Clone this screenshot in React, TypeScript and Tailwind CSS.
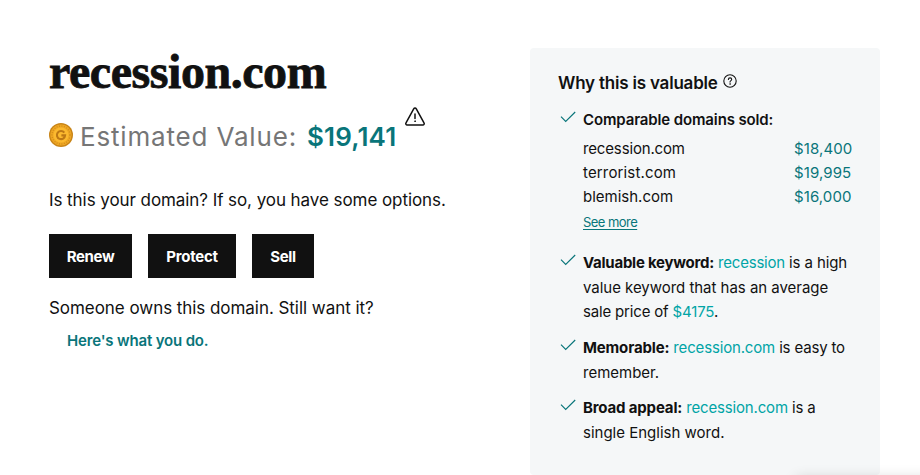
import type { ReactNode } from "react";

function Coin() {
  return (
    <svg className="-mt-[2px] h-6 w-6 shrink-0" viewBox="0 0 24 24">
      <circle cx="12" cy="12" r="12" fill="#c98518" />
      <circle cx="12" cy="12" r="10.6" fill="#f0a824" />
      <circle cx="12" cy="12" r="9" fill="none" stroke="#d4901c" strokeWidth="1.4" strokeDasharray="1.2 1.3" />
      <circle cx="12" cy="12" r="7.6" fill="#fbb92f" />
      <path d="M15.3 9.6A4.1 4.1 0 1 0 16.1 12.4H12.4" fill="none" stroke="#bd7814" strokeWidth="2.1" />
    </svg>
  );
}

function Warning() {
  return (
    <svg className="h-5 w-5" viewBox="0 0 20 20" fill="none" stroke="#111" strokeWidth="1.5" strokeLinecap="round" strokeLinejoin="round">
      <path d="M8.7 1.8a1.5 1.5 0 0 1 2.6 0l7.7 14.1a1.3 1.3 0 0 1-1.2 2H2.2a1.3 1.3 0 0 1-1.2-2z" />
      <path d="M10 7v4.4" />
      <circle cx="10" cy="14.2" r=".45" fill="#111" strokeWidth=".8" />
    </svg>
  );
}

function Help() {
  return (
    <svg className="h-[14px] w-[14px]" viewBox="0 0 14 14" fill="none" stroke="#111" strokeWidth="1.1" strokeLinecap="round">
      <circle cx="7" cy="7" r="6.2" />
      <path d="M5.4 5.5C5.4 3.3 8.7 3.4 8.7 5.4 8.7 6.7 7 6.6 7 8.1" />
      <circle cx="7" cy="10" r=".3" fill="#111" strokeWidth=".7" />
    </svg>
  );
}

function Check() {
  return (
    <svg className="mt-[3px] h-3 w-4 shrink-0" viewBox="0 0 16 12" fill="none" stroke="#09757a" strokeWidth="1.15">
      <path d="M1 5.7 5.7 10.4 15.2 1" />
    </svg>
  );
}

function Item({ children, className }: { children: ReactNode; className: string }) {
  return (
    <li className={`flex gap-[7px] whitespace-nowrap ${className}`}>
      <Check />
      <div>{children}</div>
    </li>
  );
}

const sales = [
  { name: "recession.com", price: "$18,400", spacing: "tracking-[-0.15px]" },
  { name: "terrorist.com", price: "$19,995", spacing: "tracking-[0.15px]" },
  { name: "blemish.com", price: "$16,000", spacing: "tracking-normal" },
];

export default function App() {
  return (
    <main className="relative flex h-[475px] w-[920px] overflow-hidden bg-white font-['Inter','Liberation_Sans',sans-serif] text-[#111]">
      <section className="ml-[49px] w-[481px] whitespace-nowrap pt-[46px]">
        <h1 className="h-[52px] font-['Liberation_Serif',serif] text-[48px] leading-[52px] font-bold tracking-[-0.45px] [-webkit-text-stroke:0.8px_#111]">recession.com</h1>
        <div className="mt-[18px] flex h-10 items-center">
          <Coin />
          <span className="ml-[7px] text-[26px] tracking-[0.83px] text-[#767676]">Estimated Value:</span>
          <span className="ml-[10px] text-[26px] font-semibold tracking-[0.15px] text-[#09757a]">$19,141</span>
          <span className="ml-[9px] self-start -mt-[9px]"><Warning /></span>
        </div>
        <p className="mt-8 h-6 text-[17px] leading-6 tracking-[-0.07px]">Is this your domain? If so, you have some options.</p>
        <div className="mt-[22px] flex gap-4 text-[15px] font-bold text-white">
          <button className="h-11 w-[83px] bg-[#111] pt-[2px] tracking-[-0.35px]">Renew</button>
          <button className="h-11 w-[88px] bg-[#111] pt-[2px] tracking-[-0.25px]">Protect</button>
          <button className="h-11 w-[62px] bg-[#111] pt-[2px] tracking-[-0.35px]">Sell</button>
        </div>
        <p className="mt-[18px] h-6 text-[17px] leading-6 tracking-[-0.05px]">Someone owns this domain. Still want it?</p>
        <a className="mt-[9px] ml-[18px] block text-[15px] leading-6 font-semibold tracking-[-0.16px] text-[#09757a]">Here's what you do.</a>
      </section>

      <aside className="mt-12 h-[427px] w-[350px] rounded bg-[#f5f7f8] pt-[23px] pl-[30px]">
        <h2 className="-ml-[2px] flex h-6 items-center gap-[5px] text-[17px] leading-6 font-semibold tracking-[-0.2px]">
          Why this is valuable <span className="-mt-1"><Help /></span>
        </h2>
        <ul className="mt-[13px] text-[15px] leading-[24.5px]">
          <Item className="h-[143px]">
            <div className="h-[29px] leading-6 font-semibold tracking-[-0.13px]">Comparable domains sold:</div>
            <div className="w-[270px]">
              {sales.map(({ name, price, spacing }) => (
                <div key={name} className="flex h-6 leading-6">
                  <span className={`w-[211px] ${spacing}`}>{name}</span>
                  <span className="tracking-[0.1px] text-[#09757a]">{price}</span>
                </div>
              ))}
            </div>
            <a className="mt-[3px] block text-[13px] leading-5 tracking-[-0.55px] text-[#09757a] underline underline-offset-2">See more</a>
          </Item>
          <Item className="h-[85px]">
            <span className="tracking-[-0.12px]"><b className="font-bold tracking-[-0.25px]">Valuable keyword:</b> <span className="tracking-[-0.2px] text-[#00a4a6]">recession</span> is a high</span><br />
            <span className="tracking-[-0.03px]">value keyword that has an average</span><br />
            <span className="tracking-[-0.17px]">sale price of <span className="text-[#00a4a6]">$4175</span>.</span>
          </Item>
          <Item className="h-[60px]">
            <span className="tracking-[-0.16px]"><b className="font-bold">Memorable:</b> <span className="text-[#00a4a6]">recession.com</span> is easy to</span><br />
            remember.
          </Item>
          <Item className="h-[60px]">
            <span className="tracking-[-0.16px]"><b className="font-bold">Broad appeal:</b> <span className="text-[#00a4a6]">recession.com</span> is a</span><br />
            single English word.
          </Item>
        </ul>
      </aside>
      <div className="absolute top-[478px] left-[796px] h-10 w-[160px] shadow-[0_0_14px_rgba(0,0,0,0.16)]" />
    </main>
  );
}
